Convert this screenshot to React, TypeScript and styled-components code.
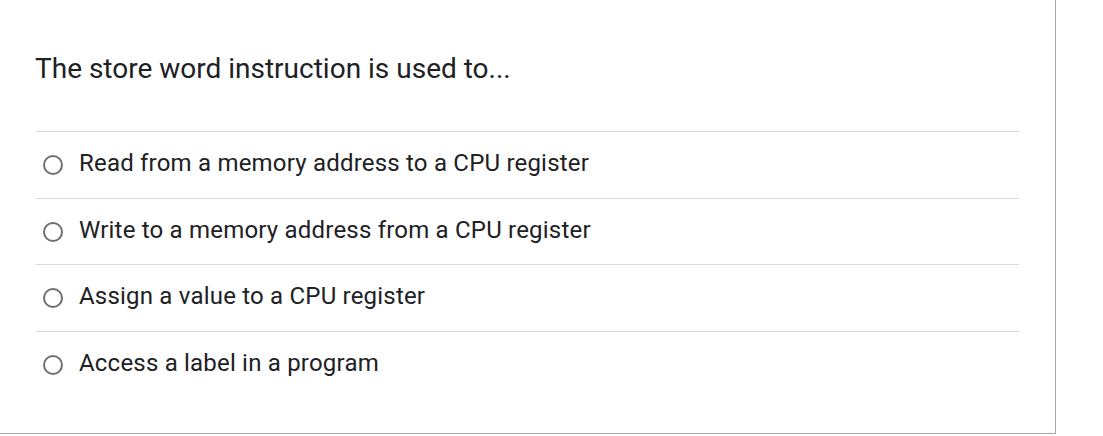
import React from "react";
import styled, { createGlobalStyle } from "styled-components";

const Global = createGlobalStyle`
  html, body { margin: 0; padding: 0; background: #ffffff; }
  body { font-family: Roboto, "Noto Sans", Arial, sans-serif; }
`;

const Card = styled.div`
  box-sizing: border-box;
  width: 1056px;
  height: 434px;
  background: #fff;
  border-right: 1px solid #a8a8a8;
  border-bottom: 1px solid #a8a8a8;
  padding: 53px 36px 0 35px;
`;

const Question = styled.h2`
  margin: 0;
  font-size: 28px;
  line-height: 32px;
  font-weight: 400;
  color: #202124;
`;

const OptionList = styled.div`
  margin-top: 46px;
  display: flex;
  flex-direction: column;
`;

const Option = styled.label`
  display: flex;
  align-items: center;
  height: 66.7px;
  box-sizing: border-box;
  border-top: 1px solid #dadada;
  padding-left: 8px;
  gap: 16px;
  cursor: pointer;
`;

const Radio = styled.span`
  box-sizing: border-box;
  width: 20px;
  height: 20px;
  border-radius: 50%;
  border: 2px solid #6f6f6f;
  flex: none;
`;

const OptionText = styled.span`
  font-size: 24px;
  letter-spacing: 0.2px;
  line-height: 28px;
  margin-bottom: 4px;
  color: #202124;
`;

const options = [
  "Read from a memory address to a CPU register",
  "Write to a memory address from a CPU register",
  "Assign a value to a CPU register",
  "Access a label in a program",
];

export default function App() {
  return (
    <>
      <Global />
      <Card>
        <Question>The store word instruction is used to...</Question>
        <OptionList>
          {options.map((o) => (
            <Option key={o}>
              <Radio />
              <OptionText>{o}</OptionText>
            </Option>
          ))}
        </OptionList>
      </Card>
    </>
  );
}
